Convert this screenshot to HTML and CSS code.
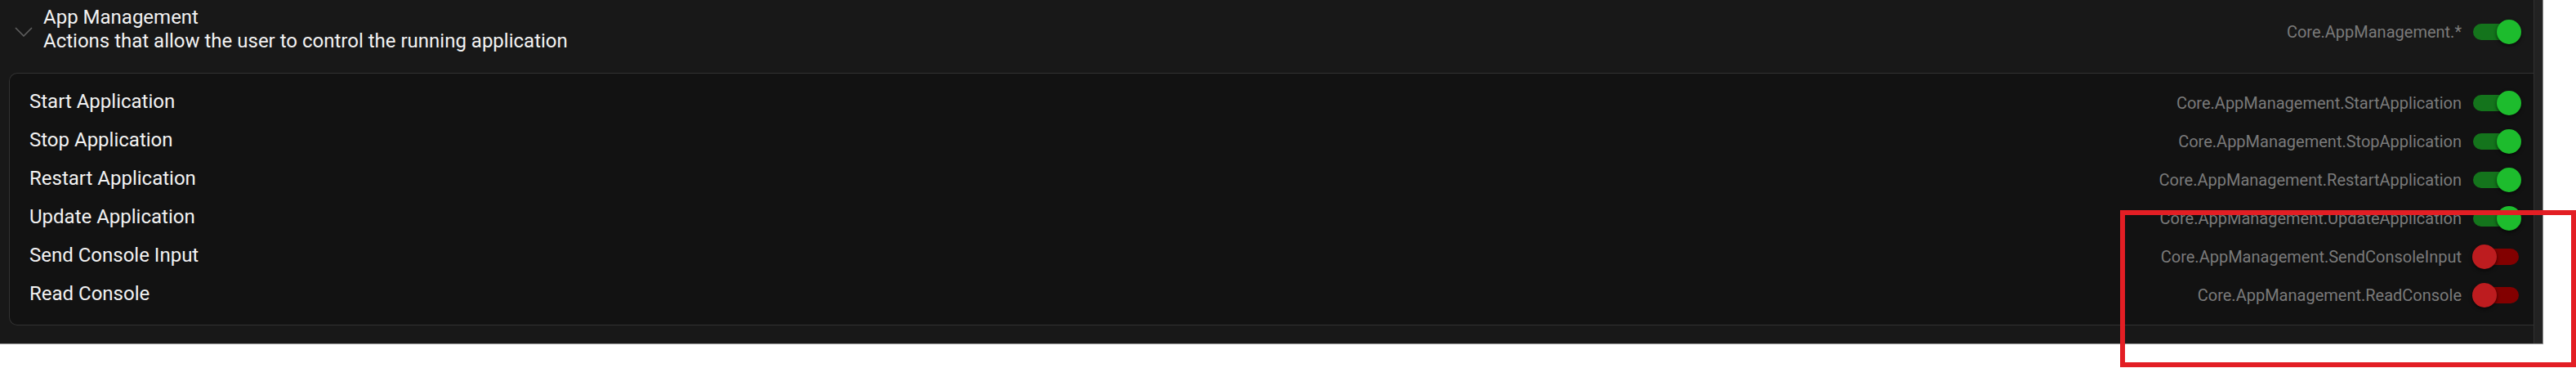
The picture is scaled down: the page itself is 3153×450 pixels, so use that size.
FILE: index.html
```html
<!DOCTYPE html>
<html lang="en">
<head>
    <meta charset="UTF-8">
    <meta name="viewport" content="width=device-width, initial-scale=1.0">
    <title>Permissions - App Management</title>
    <link rel="stylesheet" href="styles.css">
</head>
<body>
    <div class="frame">
        <div class="content">
            <div class="group-header">
                <svg class="chevron" width="22" height="12" viewBox="0 0 22 12">
                    <polyline points="1,1 11,11 21,1" fill="none" stroke="#5f5f5f" stroke-width="1.6"/>
                </svg>
                <div class="group-text">
                    <div class="group-title">App Management</div>
                    <div class="group-desc">Actions that allow the user to control the running application</div>
                </div>
                <span class="node">Core.AppManagement.*</span>
                <span class="switch on"><span class="track"></span><span class="knob"></span></span>
            </div>

            <div class="perm-list">
                <div class="perm-row">
                    <span class="perm-name">Start Application</span>
                    <span class="node">Core.AppManagement.StartApplication</span>
                    <span class="switch on"><span class="track"></span><span class="knob"></span></span>
                </div>
                <div class="perm-row">
                    <span class="perm-name">Stop Application</span>
                    <span class="node">Core.AppManagement.StopApplication</span>
                    <span class="switch on"><span class="track"></span><span class="knob"></span></span>
                </div>
                <div class="perm-row">
                    <span class="perm-name">Restart Application</span>
                    <span class="node">Core.AppManagement.RestartApplication</span>
                    <span class="switch on"><span class="track"></span><span class="knob"></span></span>
                </div>
                <div class="perm-row">
                    <span class="perm-name">Update Application</span>
                    <span class="node">Core.AppManagement.UpdateApplication</span>
                    <span class="switch on"><span class="track"></span><span class="knob"></span></span>
                </div>
                <div class="perm-row">
                    <span class="perm-name">Send Console Input</span>
                    <span class="node">Core.AppManagement.SendConsoleInput</span>
                    <span class="switch off"><span class="track"></span><span class="knob"></span></span>
                </div>
                <div class="perm-row">
                    <span class="perm-name">Read Console</span>
                    <span class="node">Core.AppManagement.ReadConsole</span>
                    <span class="switch off"><span class="track"></span><span class="knob"></span></span>
                </div>
            </div>
        </div>
        <div class="scroll-track"></div>
    </div>

    <div class="highlight"></div>
</body>
</html>
```

FILE: styles.css
```css
body {
    margin: 0;
    background-color: #fff;
    font-family: Roboto, "Liberation Sans", sans-serif;
    overflow: hidden;
}
.frame {
    display: flex;
    width: 3112px;
    height: 420px;
    background-color: #181818;
    border-right: 1px solid #8c8c8c;
    border-bottom: 1px solid #9a9a9a;
}
.content {
    flex: 1;
    overflow: hidden;
}
.scroll-track {
    width: 10px;
    background-color: #222;
    border-left: 1px solid #313131;
}
.group-header {
    display: flex;
    align-items: center;
    height: 78px;
    padding-right: 15px;
}
.chevron {
    margin: 0 13px 0 18px;
    align-self: flex-start;
    margin-top: 33px;
}
.group-text {
    flex: 1;
    color: #f2f2f2;
    font-size: 24px;
    line-height: 29px;
    margin-bottom: 6px;
}
.perm-list {
    margin: 11px 0 0 11px;
    height: 283px;
    padding: 12px 15px 12px 24px;
    background-color: #121212;
    border: 1px solid #323232;
    border-right: none;
    border-radius: 10px 0 0 10px;
}
.perm-row {
    display: flex;
    align-items: center;
    height: 47px;
}
.perm-name {
    flex: 1;
    color: #f2f2f2;
    font-size: 24px;
    margin-top: -4px;
}
.node {
    color: #7a7a7a;
    font-size: 20px;
    margin-right: 13px;
}
.switch {
    position: relative;
    width: 60px;
    height: 30px;
    flex-shrink: 0;
}
.switch .track {
    position: absolute;
    left: 1px;
    top: 5px;
    width: 56px;
    height: 20px;
    border-radius: 10px;
}
.switch .knob {
    position: absolute;
    top: 0;
    width: 30px;
    height: 30px;
    border-radius: 50%;
    box-shadow: 0 2px 4px rgba(0, 0, 0, 0.6);
}
.switch.on .track {
    background-color: #14741c;
}
.switch.on .knob {
    left: 30px;
    background-color: #1dbc2d;
}
.switch.off .track {
    background-color: #820000;
}
.switch.off .knob {
    left: 0;
    background-color: #bd1c1f;
}
.highlight {
    position: absolute;
    left: 2595px;
    top: 257px;
    width: 558px;
    height: 192px;
    box-sizing: border-box;
    border: 6px solid #e31e24;
}
```
